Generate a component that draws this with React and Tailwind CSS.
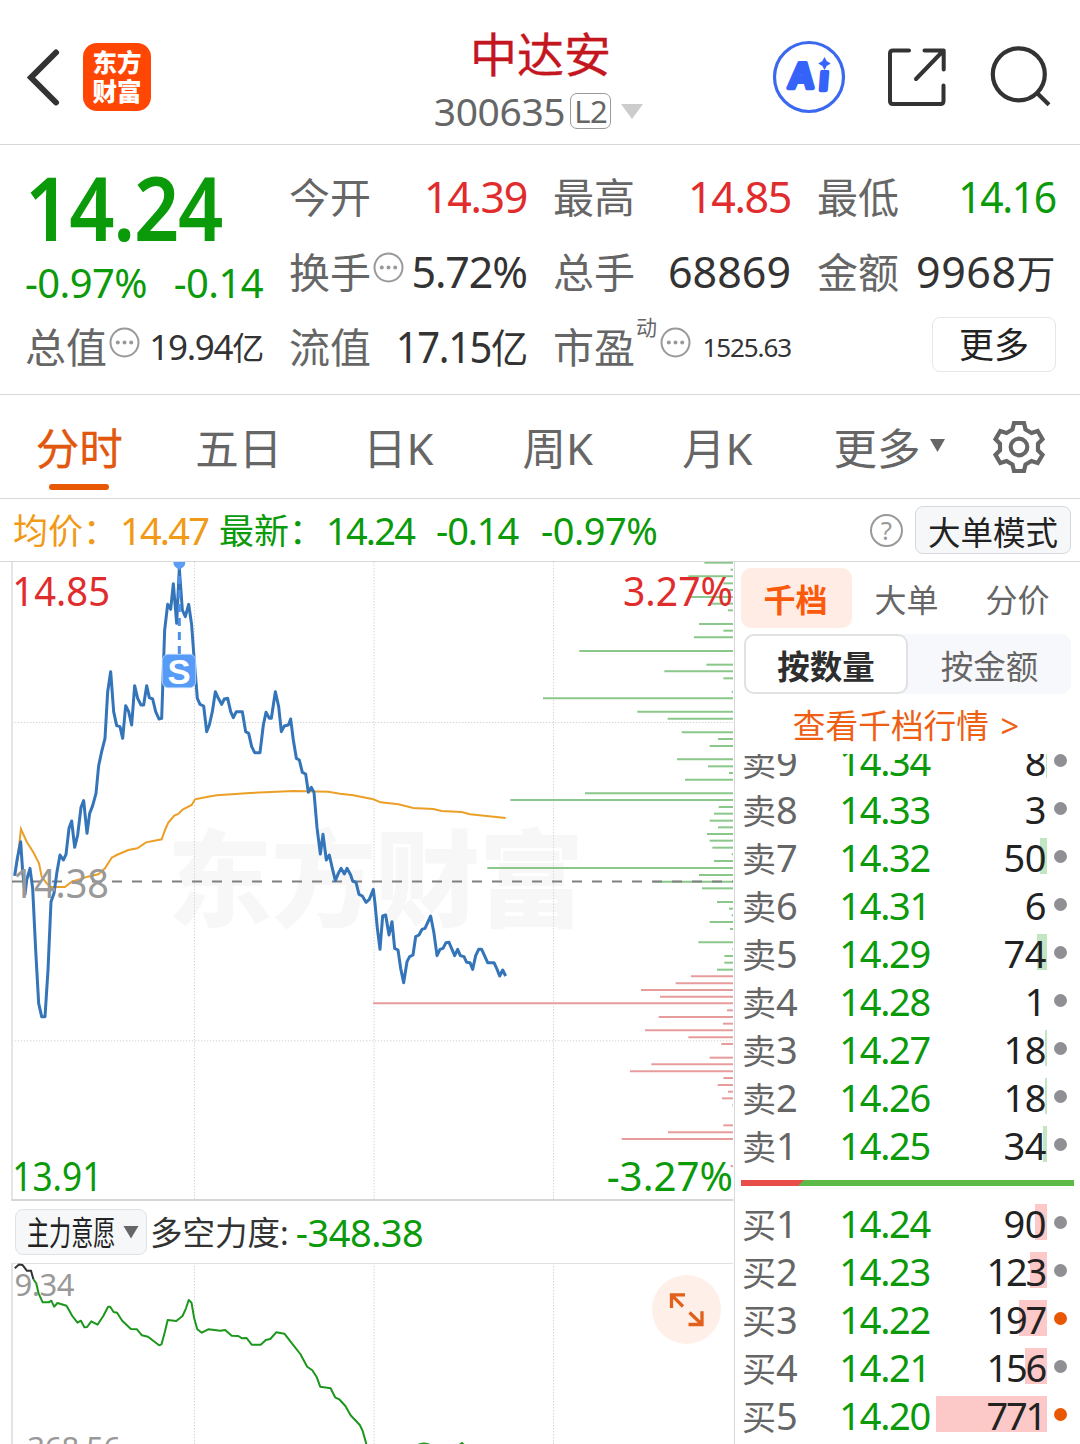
import { useState } from "react";

const GREEN = "#0a9a0a";

const sellOrders = [
  { label: "9", price: "14.34", qty: 8, bar: 1 },
  { label: "8", price: "14.33", qty: 3, bar: 0 },
  { label: "7", price: "14.32", qty: 50, bar: 7 },
  { label: "6", price: "14.31", qty: 6, bar: 0 },
  { label: "5", price: "14.29", qty: 74, bar: 10 },
  { label: "4", price: "14.28", qty: 1, bar: 0 },
  { label: "3", price: "14.27", qty: 18, bar: 2 },
  { label: "2", price: "14.26", qty: 18, bar: 2 },
  { label: "1", price: "14.25", qty: 34, bar: 4 },
];

const buyOrders = [
  { label: "1", price: "14.24", qty: 90, bar: 12 },
  { label: "2", price: "14.23", qty: 123, bar: 17 },
  { label: "3", price: "14.22", qty: 197, bar: 28, hot: true },
  { label: "4", price: "14.21", qty: 156, bar: 22 },
  { label: "5", price: "14.20", qty: 771, bar: 111, hot: true },
];

// chart units: 3 per css pixel
const priceLine =
  "44,962 52,910 62,860 68,950 75,1018 80,975 90,940 98,1000 107,1185 116,1345 125,1385 135,1385 144,1245 153,1040 162,1015 171,950 180,900 190,915 198,898 207,820 215,798 224,877 233,840 243,757 251,737 261,835 269,775 278,752 288,715 296,632 305,590 315,550 323,410 332,350 341,470 350,512 360,515 368,550 377,452 386,470 395,510 404,392 413,430 423,450 431,450 440,392 448,428 458,432 467,470 477,492 485,490 494,225 503,148 512,163 520,86 530,205 538,40 547,165 556,185 566,148 575,210 583,320 592,430 600,448 611,453 620,530 628,510 637,470 646,410 655,430 665,448 673,432 683,430 692,470 700,488 709,470 727,470 737,530 746,535 755,575 764,593 780,593 790,510 798,472 808,490 814,490 826,410 836,455 844,530 853,513 865,510 872,492 880,555 889,610 898,615 907,652 917,657 925,712 934,697 942,712 951,818 961,897 969,838 979,915 988,900 997,940 1006,977 1015,955 1023,940 1033,957 1041,940 1052,960 1058,978 1068,982 1077,1018 1087,1023 1098,1042 1108,1033 1120,1003 1125,1045 1132,1120 1140,1183 1148,1083 1157,1080 1167,1140 1176,1100 1184,1180 1194,1185 1202,1240 1211,1283 1221,1220 1229,1205 1239,1200 1247,1145 1257,1140 1266,1123 1275,1120 1292,1083 1302,1135 1311,1202 1320,1183 1329,1180 1338,1163 1347,1162 1364,1202 1373,1183 1381,1202 1392,1205 1400,1222 1410,1223 1418,1243 1427,1202 1436,1183 1445,1183 1463,1223 1482,1223 1490,1240 1499,1263 1508,1245 1517,1263";

const averageLine =
  "44,962 53,910 63,822 80,860 100,892 117,925 125,965 140,985 152,996 195,996 215,980 240,973 262,965 295,958 315,940 335,908 350,900 385,885 412,880 438,862 485,853 495,825 505,803 523,782 535,777 548,764 575,750 585,733 620,726 650,721 695,718 750,714 830,710 880,708 985,710 1020,716 1060,721 1120,733 1142,742 1195,748 1240,759 1300,762 1325,768 1385,771 1410,778 1517,789";

// [length, y]
const sellDepth = [
  [86, 23], [7, 44], [134, 64], [29, 85], [19, 105], [134, 126], [69, 146], [15, 166], [102, 207], [29, 227],
  [117, 247], [461, 288], [80, 329], [206, 349], [29, 370], [4, 410], [570, 430], [287, 470], [196, 491], [154, 532],
  [45, 552], [70, 573], [168, 613], [75, 634], [12, 654], [144, 674], [444, 715], [668, 735], [43, 756], [57, 776],
  [70, 797], [45, 817], [78, 837], [70, 857], [62, 878], [4, 898], [57, 918], [737, 939], [102, 960], [241, 980],
  [93, 1000], [48, 1041], [12, 1061], [4, 1081], [70, 1101], [9, 1122], [104, 1162], [2, 1183], [26, 1203], [26, 1223],
  [48, 1244],
];

const buyDepth = [
  [126, 1264], [172, 1285], [276, 1305], [219, 1325], [1080, 1345], [18, 1366], [223, 1386], [30, 1406], [264, 1426],
  [134, 1447], [35, 1467], [70, 1508], [245, 1528], [309, 1549], [29, 1569], [46, 1590], [15, 1610], [33, 1630],
  [2, 1651], [29, 1711], [195, 1732], [334, 1752], [7, 1833],
];

const forceLine =
  "33.4,1279.3 36.2,1283.3 38.6,1293.3 42.7,1302.3 48.9,1302.3 51.3,1300.7 54.1,1306.7 57.5,1303 66.5,1305.7 72.3,1316 77.5,1322.7 80.9,1320.7 84.4,1327.3 87.1,1327 91.3,1321.3 97.5,1324.7 103.3,1316 108.1,1306.7 110.2,1306.7 113.6,1312 117.1,1312.7 122.2,1320.7 130.9,1329 137,1329.3 141.9,1335.3 148,1336.7 159.1,1345.3 161.5,1344.3 164.9,1331.7 167.7,1320 176.3,1321 182.5,1316 186,1308.3 188.7,1300 191.5,1302.7 194.2,1318.3 197.3,1329.3 201.8,1332.7 208.3,1329.3 220.4,1330.7 225.2,1330 231.7,1335.7 238.3,1336 242.1,1338.3 246.6,1338 251.7,1344.7 260.7,1344.7 265.8,1340 270.3,1339 276.2,1332.3 284.4,1333.7 292.7,1344.3 300.3,1354 307.2,1366.7 312.3,1370.3 316.8,1377.3 320.2,1386.7 330.6,1388.3 335.1,1397.3 339.2,1399.3 345.4,1406 350.6,1415.3 359.8,1425 362.6,1430.7 365.7,1441.7 367,1447";

function App() {
  return (
    <div className="h-[1444px] w-[1080px] overflow-hidden bg-white font-['Noto_Sans','Noto_Sans_CJK_SC',sans-serif] text-[#333]">
      <Header />
      <Quote />
      <PeriodTabs />
      <InfoBar />
      <main className="flex h-[882px]">
        <section className="w-[734px] shrink-0">
          <PriceChart />
          <div className="flex h-[61px] items-center pb-[2px] pl-[15px]">
            <button className="flex h-[46px] w-[132px] items-center rounded-lg border border-[#e0e3e6] bg-[#f6f7f9] pl-[11px]">
              <span className="w-[96px]">
                <span className="inline-block origin-left scale-x-[0.67] pt-[2px] text-[33px] leading-[42px] whitespace-nowrap text-[#222]">
                  主力意愿
                </span>
              </span>
              <svg className="h-[14px] w-[16px] shrink-0" viewBox="0 0 16 14">
                <path d="M0.5 1h15L8 13.5z" fill="#666" />
              </svg>
            </button>
            <span className="ml-[3px] pt-[2px] text-[32.5px] leading-[44px] whitespace-nowrap">多空力度:</span>
            <span className="ml-[7px] text-[38px] leading-[44px] tracking-[-0.5px] text-[#0a9a0a]">-348.38</span>
          </div>
          <ForceChart />
        </section>
        <OrderBook />
      </main>
    </div>
  );
}

function Header() {
  return (
    <header className="flex h-[145px] items-center justify-between border-b border-[#d6d8da] pr-[28px] pl-[25px]">
      <div className="flex w-[345px] items-center pt-[10px]">
        <svg className="h-[60px] w-[36px]" viewBox="0 0 36 60" fill="none" stroke="#333" strokeWidth="6">
          <path d="M31 5.500L6 30.500L31 55.500" strokeLinecap="round" />
        </svg>
        <div className="ml-[22px] flex h-[68px] w-[68px] flex-col items-center justify-center rounded-[14px] bg-[#ff4602] text-[24.500px] leading-[29px] font-black text-white">
          <span>东方</span>
          <span>财富</span>
        </div>
      </div>

      <div className="flex flex-col items-center pt-[20px]">
        <h1 className="pl-[4px] text-[47px] leading-[58px] text-[#c4161f] [-webkit-text-stroke:0.3px_#c4161f]">中达安</h1>
        <div className="flex h-[57px] items-center">
          <span className="text-[39px] tracking-[-0.4px] text-[#666]">300635</span>
          <span className="ml-[5px] flex h-[36px] w-[41px] items-center justify-center rounded-[7px] border-[1.5px] border-[#999] text-[31px] leading-none tracking-[-0.5px] text-[#666]">
            L2
          </span>
          <svg className="ml-[10px] h-[15px] w-[22px]" viewBox="0 0 22 15">
            <path d="M0 0h22L11 15z" fill="#ccc" />
          </svg>
        </div>
      </div>

      <div className="flex w-[345px] items-center justify-end gap-[41px] pt-[10px]">
        <svg className="h-[74px] w-[74px]" viewBox="771.500 40.500 74 74">
          <circle cx="808.500" cy="77.500" r="34.500" fill="none" stroke="#3a68ee" strokeWidth="3.200" />
          <g
            fontWeight="700"
            fill="#3563fa"
            stroke="#3563fa"
            strokeLinejoin="round"
            transform="translate(6.500 0) skewX(-4.500)"
            className="font-['Liberation_Sans',sans-serif]"
          >
            <text>
              <tspan x="787.500" y="89" fontSize="36" strokeWidth="4.500">A</tspan>
              <tspan x="818.500" y="90.500" fontSize="34" strokeWidth="4.500">i</tspan>
            </text>
          </g>
          <path d="M814 55h19v15.500h-19z" fill="#fff" />
          <path d="M824 58l2 3.800l3.800 2.200l-3.800 2.200l-2 3.800l-2-3.800l-3.800-2.200l3.800-2.200z" fill="#3563fa" stroke="#3563fa" strokeWidth="0.600" />
        </svg>
        <svg className="h-[60px] w-[60px]" viewBox="886.500 47.500 60 60" fill="none" stroke="#333" strokeWidth="4" strokeLinecap="round">
          <path d="M908.500 51h-16q-3 0-3 3v47.500q0 3 3 3H940q3 0 3-3V86" />
          <path d="M924 51h19.200v19M943 51l-27.500 28.500" strokeLinejoin="round" />
        </svg>
        <svg className="h-[64px] w-[64px]" viewBox="988 45.500 64 64" fill="none" stroke="#333" strokeWidth="4.200">
          <circle cx="1018.800" cy="74.800" r="26" />
          <path d="M1037.500 94l11.500 11.200" />
        </svg>
      </div>
    </header>
  );
}

function MoreDots() {
  return (
    <svg className="mb-[8px] ml-[2px] h-[31px] w-[31px] shrink-0" viewBox="0 0 31 31" fill="#999">
      <circle cx="15.500" cy="15.500" r="14" fill="none" stroke="#999" strokeWidth="2" />
      <circle cx="8.800" cy="15.500" r="2" />
      <circle cx="15.500" cy="15.500" r="2" />
      <circle cx="22.200" cy="15.500" r="2" />
    </svg>
  );
}

function Stat({ label, dots, sup, value, className }) {
  return (
    <div className="flex h-[75px] items-center whitespace-nowrap">
      <span className="pt-[2px] text-[41px] text-[#666]">{label}</span>
      {sup && <span className="mr-[1px] mb-[38px] ml-[1px] text-[21px] leading-none text-[#666]">{sup}</span>}
      {dots && <MoreDots />}
      <span className={`ml-auto pt-[1px] ${className}`}>{value}</span>
    </div>
  );
}

function Quote() {
  return (
    <section className="grid h-[250px] grid-cols-[238px_238px_238px_239px] grid-rows-[75px_75px_75px] gap-x-[26px] border-b border-[#d6d8da] pt-[14px] pl-[25px]">
      <div className="row-span-2 whitespace-nowrap text-[#0a9a0a]">
        <p className="origin-left scale-x-[0.9] pt-[2px] text-[88px] leading-[92px] font-semibold tracking-[-1.3px]">
          14.24
        </p>
        <div className="mt-[5px] flex justify-between text-[40px] leading-[50px] tracking-[-0.6px]">
          <span>-0.97%</span>
          <span>-0.14</span>
        </div>
      </div>
      <Stat label="今开" value="14.39" className="text-[43px] tracking-[-1.4px] text-[#e02c2c]" />
      <Stat label="最高" value="14.85" className="text-[43px] tracking-[-1.4px] text-[#e02c2c]" />
      <Stat label="最低" value="14.16" className="origin-right scale-x-[0.95] text-[43px] tracking-[-1.4px] text-[#0a9a0a]" />

      <Stat label="换手" dots value="5.72%" className="text-[43px] tracking-[-1.1px]" />
      <Stat label="总手" value="68869" className="text-[43px]" />
      <Stat
        label="金额"
        value={<>9968<span className="text-[39px]">万</span></>}
        className="text-[43px] tracking-[0.5px]"
      />

      <Stat
        label="总值"
        dots
        value={<>19.94<span className="text-[32px]">亿</span></>}
        className="text-[35px] tracking-[-1.3px]"
      />
      <Stat
        label="流值"
        value={<>17.15<span className="text-[40px]">亿</span></>}
        className="origin-right scale-x-[0.93] text-[43px] tracking-[-1.5px]"
      />
      <Stat label="市盈" sup="动" dots value="1525.63" className="text-[26px] tracking-[-1.1px]" />
      <div className="flex items-center justify-end">
        <button className="mb-[4px] h-[55px] w-[124px] rounded-lg border-[1.5px] border-[#e4e6e8] text-[35px] leading-[50px] text-[#222]">
          更多
        </button>
      </div>
    </section>
  );
}

function PeriodTabs() {
  const [active, setActive] = useState("分时");

  return (
    <nav className="flex h-[104px] items-center border-b border-[#d6d8da] text-[43.500px] text-[#666]">
      {["分时", "五日", "日K", "周K", "月K"].map((tab) => (
        <button
          key={tab}
          onClick={() => setActive(tab)}
          className={
            active === tab
              ? "relative h-full w-[159.500px] pt-[4px] pr-[1px] text-[#e2560e] [-webkit-text-stroke:0.3px_#e2560e]"
              : "relative h-full w-[159.500px] pt-[4px] pr-[1px]"
          }
        >
          {tab}
          {active === tab && (
            <span className="absolute bottom-[8px] left-[49px] h-[6px] w-[60px] rounded-full bg-[#e85704]" />
          )}
        </button>
      ))}
      <button className="ml-[36px] flex items-center gap-[9px] pt-[4px]">
        更多
        <svg className="mb-[7px] h-[13px] w-[15px]" viewBox="0 0 15 13">
          <path d="M0 0h15L7.500 13z" fill="#666" />
        </svg>
      </button>
      <svg className="ml-[46px] h-[56px] w-[56px]" viewBox="-28 -28 56 56" fill="none" stroke="#666" strokeWidth="4.200">
        <path d="M-5 -24H5L6.500 -17.500L12.500 -14L18.700 -16L23.500 -7.800L19 -3.300V3.300L23.500 7.800L18.700 16L12.500 14L6.500 17.500L5 24H-5L-6.500 17.500L-12.500 14L-18.700 16L-23.500 7.800L-19 3.300V-3.300L-23.500 -7.800L-18.700 -16L-12.500 -14L-6.500 -17.500Z" />
        <circle r="8.300" />
      </svg>
    </nav>
  );
}

function InfoBar() {
  return (
    <div className="flex h-[63px] items-center border-b border-[#d6d8da] pr-[9px] pl-[13px] text-[35px] whitespace-nowrap">
      <span className="w-[107px] pt-[3px] text-[#f09a18]">均价：</span>
      <span className="w-[99px] text-[38px] tracking-[-1.8px] text-[#f09a18]">14.47</span>
      <span className="w-[107px] pt-[3px] text-[#0a9a0a]">最新：</span>
      <span className="w-[110px] text-[38px] tracking-[-1.8px] text-[#0a9a0a]">14.24</span>
      <span className="w-[105px] text-[38px] tracking-[-1.1px] text-[#0a9a0a]">-0.14</span>
      <span className="text-[38px] tracking-[-0.5px] text-[#0a9a0a]">-0.97%</span>
      <span className="ml-auto flex h-[33px] w-[33px] items-center justify-center rounded-full border-[2.500px] border-[#999] text-[26px] leading-none text-[#999]">
        ?
      </span>
      <button className="ml-[12px] h-[48px] w-[156px] rounded-lg border-[1.5px] border-[#d5d9de] bg-[#f6f7f9] pt-[4px] text-[32.500px] leading-[44px] text-[#222]">
        大单模式
      </button>
    </div>
  );
}

function PriceChart() {
  return (
    <svg className="block h-[640px] w-[734px]" viewBox="0 21 2202 1920" fill="none">
      <text x="502" y="1088" fontSize="315" fontWeight="900" fill="#f7f7f7" textLength="1250">
        东方财富
      </text>

      <g stroke="#d4d4d4" strokeWidth="3" strokeDasharray="4 5">
        <path d="M583.500 21V1935M1122 21V1935M1660.500 21V1935" />
        <path d="M36 502.500H2199M36 1457.500H2199" />
      </g>
      <path d="M36 21V1935" stroke="#dfe0e2" strokeWidth="5" />
      <path d="M34 1935H2200" stroke="#d6d6d6" strokeWidth="6" />

      <g stroke="#8ac78a" strokeWidth="6">
        {sellDepth.map(([len, y]) => (
          <path key={y} d={`M2199 ${y}h-${len}`} />
        ))}
      </g>
      <g stroke="#e79c9c" strokeWidth="6">
        {buyDepth.map(([len, y]) => (
          <path key={y} d={`M2199 ${y}h-${len}`} />
        ))}
      </g>
      <path d="M36 979.500H2199" stroke="#808080" strokeWidth="6" strokeDasharray="30 30" />

      <polyline points={averageLine} stroke="#ec9f27" strokeWidth="6" />
      <polyline points={priceLine} stroke="#3474b9" strokeWidth="9" strokeLinejoin="round" />

      <path d="M538 21V300" stroke="#4a90ea" strokeWidth="9" strokeDasharray="24 18" />
      <path d="M520 21a18 20 0 0 0 36 0z" fill="#5a9df5" />
      <rect x="487" y="298" width="100" height="100" rx="18" fill="#579bf8" stroke="#a9cdfb" strokeWidth="3" />
      <text x="537" y="386" fontSize="104" fontWeight="700" fill="#fff" textAnchor="middle" className="font-['Liberation_Sans',sans-serif]">
        S
      </text>

      <g fontSize="122">
        <text x="37" y="152" fill="#e02c2c" textLength="293" lengthAdjust="spacingAndGlyphs">14.85</text>
        <text x="37" y="1028" fill="#999" textLength="290" lengthAdjust="spacingAndGlyphs">14.38</text>
        <text x="37" y="1907" fill={GREEN} textLength="270" lengthAdjust="spacingAndGlyphs">13.91</text>
        <text x="1869" y="152" fill="#e02c2c" textLength="330" lengthAdjust="spacingAndGlyphs">3.27%</text>
        <text x="1820" y="1907" fill={GREEN} textLength="379" lengthAdjust="spacingAndGlyphs">-3.27%</text>
      </g>
    </svg>
  );
}

function ForceChart() {
  return (
    <svg className="block h-[181px] w-[734px]" viewBox="0 1263 734 181" fill="none">
      <g stroke="#d4d4d4" strokeDasharray="1.400 1.600">
        <path d="M194.500 1263V1444M374 1263V1444M553.500 1263V1444" />
      </g>
      <path d="M12 1263V1444" stroke="#dfe0e2" strokeWidth="1.700" />
      <path d="M11 1263.500H733" stroke="#dfe0e2" />
      <text x="14.500" y="1295.500" fontSize="31" fill="#999" textLength="60">9.34</text>
      <text x="18" y="1459" fontSize="31" fill="#999" textLength="103">-368.56</text>
      <polyline points="14.8,1268.3 18.9,1264.500 22.4,1265 26.9,1270.7 31,1270.7 33.4,1279.3" stroke="#333" strokeWidth="2" />
      <polyline points={forceLine} stroke="#1c961c" strokeWidth="2" strokeLinejoin="round" />
      <path d="M416 1446q8-5 16 0M458 1446l4-3 3 3" stroke="#1c961c" strokeWidth="2" />

      <circle cx="686.500" cy="1309.500" r="34.500" fill="#fef0e8" />
      <path
        d="M671.500 1308V1294.800H685M672 1295.300l11 11.200M688.500 1324.500H702V1311.300M701.500 1324l-12-11.500"
        stroke="#e2601a"
        strokeWidth="3.300"
      />
    </svg>
  );
}

function OrderBook() {
  return (
    <aside className="w-[346px] shrink-0 border-l border-[#d6d8da]">
      <div className="flex h-[72px] items-center pl-[6px] text-[32px] text-[#666]">
        <button className="h-[60px] w-[111px] rounded-[10px] bg-[#ffede5] pt-[4px] pr-[2px] font-bold text-[#fb5a0c]">千档</button>
        <button className="w-[111px] pt-[4px] pr-[2px]">大单</button>
        <button className="w-[111px] pt-[4px] pr-[2px]">分价</button>
      </div>

      <div className="ml-[9px] flex h-[60px] w-[327px] rounded-[10px] bg-[#f7f8fb] text-[32.500px] text-[#666]">
        <button className="w-[164px] rounded-[10px] border-2 border-[#e0e1e3] bg-white pt-[6px] font-bold text-[#2e2e2e]">按数量</button>
        <button className="flex-1 pt-[6px]">按金额</button>
      </div>

      <p className="h-[60px] pr-[3px] text-center text-[32.700px] leading-[64px] text-[#ee5f14]">
        查看千档行情 <span className="ml-[3px]">&gt;</span>
      </p>

      <div className="h-[416px] overflow-hidden">
        <div className="-mt-[16px]">
          {sellOrders.map((order) => (
            <OrderRow key={order.label} side="卖" {...order} />
          ))}
        </div>
      </div>

      <div className="mt-[10px] mb-[14px] ml-[6px] flex h-[6px] w-[333px] bg-[#5dba47]">
        <svg className="h-[6px] w-[63px]" viewBox="0 0 63 6">
          <path d="M0 0h63l-6 6H0z" fill="#e94d49" />
        </svg>
      </div>

      {buyOrders.map((order) => (
        <OrderRow key={order.label} side="买" {...order} />
      ))}
    </aside>
  );
}

function OrderRow({ side, label, price, qty, bar, hot }) {
  return (
    <div className="relative flex h-[48px] items-center pl-[7px] text-[38px] leading-[48px]">
      <span
        className={side === "卖" ? "absolute top-[4px] right-[33px] h-[36px] bg-[#c1e6c1]" : "absolute top-[4px] right-[33px] h-[36px] bg-[#fcc8c8]"}
        style={{ width: bar }}
      />
      <span className="w-[70px] text-[#666]">
        <span className="text-[34px]">{side}</span>
        {label}
      </span>
      <span className="w-[118px] pb-[2px] text-right tracking-[-1.3px] text-[#0a9a0a]">{price}</span>
      <span
        className={
          qty > 99
            ? "relative w-[116px] pr-[1px] pb-[2px] text-right tracking-[-2.2px] text-[#222]"
            : "relative w-[116px] pb-[2px] text-right tracking-[-0.5px] text-[#222]"
        }
      >
        {qty}
      </span>
      <span
        className={
          hot ? "mb-[4px] ml-[8px] h-[13px] w-[13px] rounded-full bg-[#e85704]" : "mb-[4px] ml-[8px] h-[13px] w-[13px] rounded-full bg-[#8f8f94]"
        }
      />
    </div>
  );
}

export default App;
